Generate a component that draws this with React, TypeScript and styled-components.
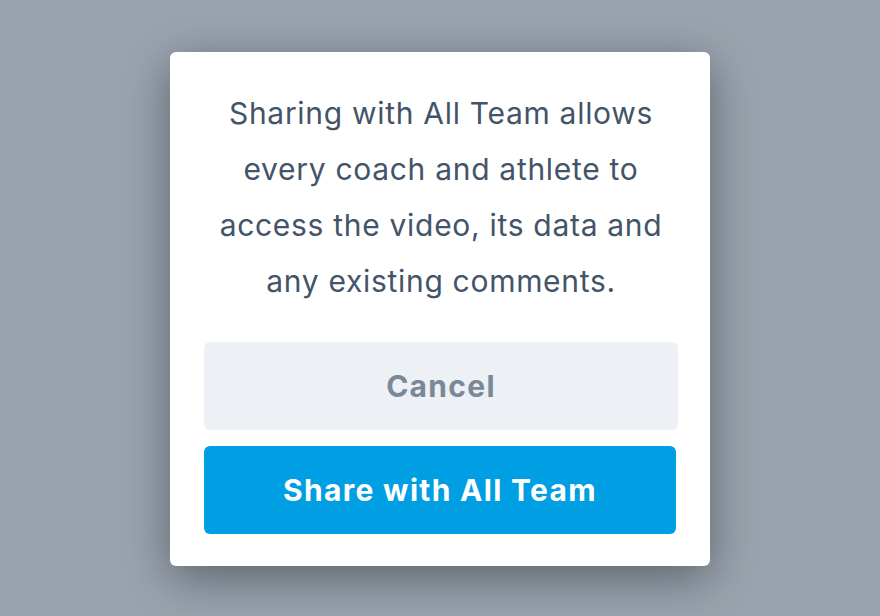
import styled, { createGlobalStyle } from "styled-components";

const GlobalStyle = createGlobalStyle`
  html, body {
    margin: 0;
    height: 100%;
  }
  body {
    background: #9ba4ae;
    font-family: Inter, Roboto, "Liberation Sans", sans-serif;
  }
  #root {
    height: 100%;
  }
`;

const Backdrop = styled.div`
  height: 100%;
  box-sizing: border-box;
  padding-top: 2px;
  display: flex;
  align-items: center;
  justify-content: center;
`;

const Dialog = styled.div`
  width: 540px;
  box-sizing: border-box;
  padding: 33px 32px 32px 34px;
  background: #fff;
  border-radius: 6px;
  box-shadow: 0 12px 48px rgba(40, 46, 56, 0.55);
  display: flex;
  flex-direction: column;
`;

const Message = styled.p`
  margin: 0 0 33px;
  text-align: center;
  font-size: 30px;
  line-height: 56px;
  letter-spacing: 0.7px;
  color: #435469;
`;

const ButtonStack = styled.div`
  display: flex;
  flex-direction: column;
  gap: 16px;
`;

const ActionButton = styled.button<{ $primary?: boolean }>`
  height: 88px;
  border: none;
  border-radius: 6px;
  font-family: inherit;
  font-size: 30px;
  font-weight: 700;
  letter-spacing: 1.3px;
  cursor: pointer;
  background: ${(p) => (p.$primary ? "#009ee3" : "#edf0f4")};
  color: ${(p) => (p.$primary ? "#fff" : "#7b8898")};
  margin-right: ${(p) => (p.$primary ? "2px" : "0")};
`;

export default function App() {
  return (
    <>
      <GlobalStyle />
      <Backdrop>
        <Dialog>
          <Message>
            Sharing with All Team allows every coach and athlete to access the
            video, its data and any existing comments.
          </Message>
          <ButtonStack>
            <ActionButton>Cancel</ActionButton>
            <ActionButton $primary>Share with All Team</ActionButton>
          </ButtonStack>
        </Dialog>
      </Backdrop>
    </>
  );
}
